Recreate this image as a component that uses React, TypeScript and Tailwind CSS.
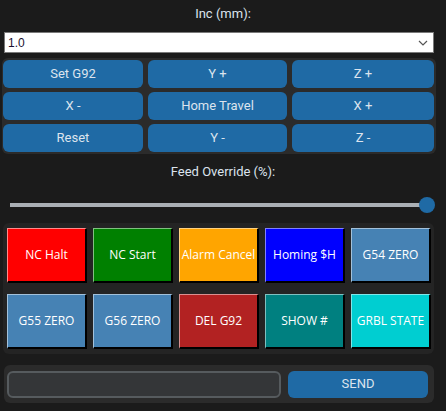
import { useState } from "react";

const JOG = ["Set G92", "Y +", "Z +", "X -", "Home Travel", "X +", "Reset", "Y -", "Z -"];

const MACROS = [
  { label: "NC Halt", cls: "bg-[#ff0000] border-l-[#ff8a8a] border-t-[#ff8a8a]" },
  { label: "NC Start", cls: "bg-[#008000] border-l-[#80c080] border-t-[#80c080]" },
  { label: "Alarm Cancel", cls: "bg-[#ffa500] border-l-[#ffd280] border-t-[#ffd280]" },
  { label: "Homing $H", cls: "bg-[#0000ff] border-l-[#8080ff] border-t-[#8080ff]" },
  { label: "G54 ZERO", cls: "bg-[#4682b4] border-l-[#a3c1da] border-t-[#a3c1da]" },
  { label: "G55 ZERO", cls: "bg-[#4682b4] border-l-[#a3c1da] border-t-[#a3c1da]" },
  { label: "G56 ZERO", cls: "bg-[#4682b4] border-l-[#a3c1da] border-t-[#a3c1da]" },
  { label: "DEL G92", cls: "bg-[#b22222] border-l-[#d99090] border-t-[#d99090]" },
  { label: "SHOW #", cls: "bg-[#008080] border-l-[#80c0c0] border-t-[#80c0c0]" },
  { label: "GRBL STATE", cls: "bg-[#00ced1] border-l-[#80e6e8] border-t-[#80e6e8]" },
];

export default function App() {
  const [inc, setInc] = useState("1.0");
  const [feed, setFeed] = useState(100);
  const [cmd, setCmd] = useState("");

  return (
    <div className="relative h-[411px] w-[446px] overflow-hidden bg-[#1b1b1b] font-['Roboto',sans-serif] text-[#dce4ee]">
      <div className="flex h-[26px] items-center justify-center pt-[1px] text-[13px]">Inc (mm):</div>

      <div className="ml-[4px] mt-[6px] flex h-[21px] w-[430px] items-center justify-between border border-[#7a7a7a] bg-white pl-[3px] pr-[5px] font-['Liberation_Sans',sans-serif] text-[12px] text-[#1a1030]">
        <span>{inc}</span>
        <svg width="10" height="6" viewBox="0 0 10 6" className="cursor-pointer" onClick={() => setInc("1.0")}>
          <path d="M1 1 L5 5 L9 1" fill="none" stroke="#555" strokeWidth="1.2" />
        </svg>
      </div>

      <div className="ml-[2px] mt-[5px] grid w-[434px] grid-cols-[140px_139px_142px] gap-x-[5px] gap-y-[4px] rounded-[6px] bg-[#2b2b2b] px-[1px] py-[2px]">
        {JOG.map((j) => (
          <button
            key={j}
            type="button"
            className="flex h-[28px] items-center justify-center rounded-[6px] bg-[#1f6aa5] text-[13px] text-[#dce4ee] hover:bg-[#144870]"
          >
            {j}
          </button>
        ))}
      </div>

      <div className="mt-[8px] flex h-[20px] items-center justify-center text-[13px]">Feed Override (%):</div>

      <div className="relative ml-[10px] mt-[21px] h-[4px] w-[417px] bg-[#aaafb4]">
        <div
          className="absolute top-1/2 h-[16px] w-[16px] -translate-x-1/2 -translate-y-1/2 rounded-full bg-[#1f6aa5]"
          style={{ left: `${feed}%` }}
          onClick={() => setFeed(feed)}
        />
      </div>

      <div className="ml-[3px] mt-[16px] grid w-[431px] grid-cols-[80px_80px_80px_80px_80px] gap-x-[6px] gap-y-[11px] rounded-[6px] bg-[#242424] pb-[5px] pl-[4px] pt-[5px]">
        {MACROS.map((m) => (
          <button
            key={m.label}
            type="button"
            className={`flex h-[55px] items-center justify-center whitespace-nowrap border-b-2 border-l border-r-2 border-t border-b-black border-r-black font-['Open_Sans',sans-serif] text-[12px] text-white ${m.cls}`}
          >
            {m.label}
          </button>
        ))}
      </div>

      <div className="ml-[4px] mt-[11px] flex h-[38px] w-[430px] items-center gap-[7px] rounded-[6px] bg-[#2b2b2b] pl-[3px]">
        <input
          value={cmd}
          onChange={(e) => setCmd(e.target.value)}
          className="h-[27px] w-[274px] rounded-[6px] border-2 border-[#565b5e] bg-[#343638] px-2 text-[13px] text-[#dce4ee] outline-none"
        />
        <button
          type="button"
          className="flex h-[27px] w-[140px] items-center justify-center rounded-[6px] bg-[#1f6aa5] text-[13px] text-[#dce4ee]"
        >
          SEND
        </button>
      </div>
    </div>
  );
}
